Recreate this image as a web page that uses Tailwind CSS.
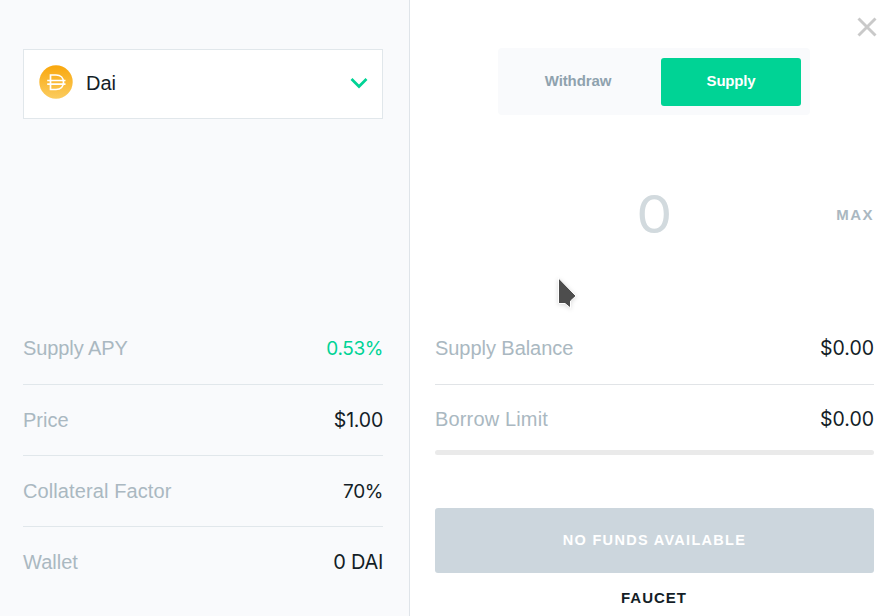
<!DOCTYPE html>
<html lang="en">
<head>
<meta charset="utf-8">
<title>Supply Dai</title>
<script src="https://cdn.jsdelivr.net/npm/@tailwindcss/browser@4"></script>
</head>
<body class="flex h-[616px] w-[894px] overflow-hidden bg-white font-['Liberation_Sans',Arial,sans-serif] text-xl text-[#141e27]">
<aside class="flex w-[410px] shrink-0 flex-col border-r border-[#dfe4e9] bg-[#f9fafc] pt-[49px] pr-[26px] pl-[23px]">
  <button class="flex h-[70px] items-center border border-[#e1e7eb] bg-white pr-[14px] pb-0.5 pl-[15px]">
    <svg class="-mt-0.5 size-[34px]" viewBox="0 0 34 34" fill="none">
      <defs><linearGradient id="dai" x1="0" y1="0" x2="0" y2="1"><stop stop-color="#f9a70c"/><stop offset="1" stop-color="#fbcc5f"/></linearGradient></defs>
      <circle cx="17" cy="17" r="16.7" fill="url(#dai)"/>
      <path d="M11.500 10h5.500c4.800 0 7.500 3 7.500 7.200s-2.700 7.300-7.500 7.300h-5.500zM8.200 15.500h18.300M8.200 19.200h18.300" stroke="#fff" stroke-width="1.700"/>
    </svg>
    <span class="ml-[13px] leading-6">Dai</span>
    <svg class="ml-auto h-3 w-[18px]" viewBox="0 0 18 12" fill="none"><path d="M1.500 2 9 9.500 16.500 2" stroke="#00d395" stroke-width="2.700"/></svg>
  </button>
  <dl class="mt-[194px] divide-y divide-[#e1e7eb] text-[#aab8c1]">
    <div class="flex h-[72px] items-center justify-between pb-0.5"><dt class="tracking-[-0.1px]">Supply APY</dt><dd class="pt-[3px] font-['Inter',sans-serif] text-[19px] tracking-[-0.4px] text-[#00d395]">0.53%</dd></div>
    <div class="flex h-[71px] items-center justify-between"><dt>Price</dt><dd class="pt-0.5 font-['Inter',sans-serif] text-[19.500px] tracking-[-0.2px] text-[#141e27]">$1.00</dd></div>
    <div class="flex h-[71px] items-center justify-between"><dt class="tracking-[0.1px]">Collateral Factor</dt><dd class="pt-0.5 font-['Inter',sans-serif] text-[19px] tracking-[-0.4px] text-[#141e27]">70%</dd></div>
    <div class="flex h-[71px] items-center justify-between pb-0.5"><dt>Wallet</dt><dd class="font-['Inter',sans-serif] tracking-[-0.3px] text-[#141e27]">0 DAI</dd></div>
  </dl>
</aside>
<main class="flex w-[484px] flex-col pr-5 pl-[25px]">
  <div class="flex h-12 justify-end pt-[17px]">
    <svg class="mr-[-3px] size-5" viewBox="0 0 20 20"><path d="m1.500 1.500 17 17m0-17-17 17" stroke="#c9c9c9" stroke-width="2.900"/></svg>
  </div>
  <div class="ml-[63px] flex h-[67px] w-[312px] items-center rounded bg-[#f9fafc] px-[9px] text-[15px] font-bold">
    <button class="h-12 w-[142px] pb-0.5 tracking-[-0.1px] text-[#8fa2ae]">Withdraw</button>
    <button class="ml-3 h-12 w-[140px] rounded-[3px] bg-[#00d395] pb-0.5 tracking-[-0.2px] text-white">Supply</button>
  </div>
  <div class="mt-[60px] grid h-20 grid-cols-[1fr_auto_1fr] items-center">
    <span></span>
    <span class="scale-x-110 font-['Inter',sans-serif] text-[52px] leading-none text-[#d2dade]">0</span>
    <button class="justify-self-end pb-0.5 text-[15px] font-bold tracking-[1.500px] text-[#aab8c1]">MAX</button>
  </div>
  <div class="mt-[58px] flex h-[72px] items-center justify-between border-b border-[#e1e4e7] pb-0.5"><span class="tracking-[-0.05px] text-[#aab8c1]">Supply Balance</span><span class="pt-0.5 font-['Inter',sans-serif] text-[19.500px]">$0.00</span></div>
  <div class="flex h-[65px] items-center justify-between pt-[3px]"><span class="tracking-[0.15px] text-[#aab8c1]">Borrow Limit</span><span class="pt-0.5 font-['Inter',sans-serif] text-[19.500px]">$0.00</span></div>
  <div class="h-[5px] rounded-full bg-[#eaeaea]"></div>
  <button class="mt-[53px] h-[65px] rounded-[3px] bg-[#ccd6dd] text-[14.500px] font-bold tracking-[1.300px] text-white">NO FUNDS AVAILABLE</button>
  <a class="mt-3.5 pr-px text-center text-[15px] font-bold tracking-[1px]">FAUCET</a>
</main>
<svg class="pointer-events-none absolute top-[274px] left-[554px] h-9 w-7 drop-shadow-sm" viewBox="0 0 28 36"><path d="M4.500 4v25.500h6.500l5.500 4.500v-7l5.500-5z" fill="#4d4d4d" stroke="#fff"/></svg>
</body>
</html>
